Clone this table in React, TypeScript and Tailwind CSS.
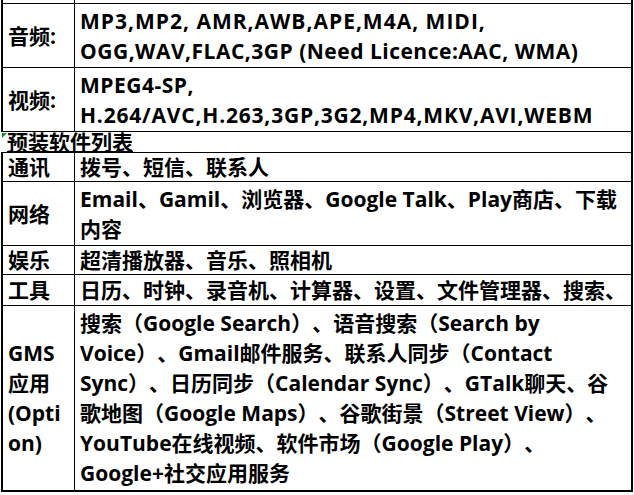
import React from 'react';

const font = { fontFamily: '"Open Sans", "Noto Sans CJK SC", sans-serif' };

type Line = [string, string?];

type Row = {
  label: React.ReactNode;
  lines: Line[];
  h: string;
};

// spec rows: latin text is set a little looser, like the sheet's renderer
const rows: Row[] = [
  {
    label: '音频:',
    lines: [
      ['MP3,MP2, AMR,AWB,APE,M4A, MIDI,', 'tracking-[1px]'],
      ['OGG,WAV,FLAC,3GP (Need Licence:AAC, WMA)', 'tracking-[0.5px]'],
    ],
    h: 'h-[64px]',
  },
  {
    label: '视频:',
    lines: [
      ['MPEG4-SP,', 'tracking-[0.5px]'],
      ['H.264/AVC,H.263,3GP,3G2,MP4,MKV,AVI,WEBM', 'tracking-[0.8px]'],
    ],
    h: 'h-[64px]',
  },
];

const apps: Row[] = [
  { label: '通讯', lines: [['拨号、短信、联系人']], h: 'h-[29px]' },
  { label: '网络', lines: [['Email、Gamil、浏览器、Google Talk、Play商店、下载'], ['内容']], h: 'h-[64px]' },
  { label: '娱乐', lines: [['超清播放器、音乐、照相机']], h: 'h-[29px]' },
  { label: '工具', lines: [['日历、时钟、录音机、计算器、设置、文件管理器、搜索、']], h: 'h-[31px]' },
  {
    label: (
      <>
        GMS
        <br />
        应用
        <br />
        (Opti
        <br />
        on)
      </>
    ),
    lines: [
      ['搜索（Google Search）、语音搜索（Search by'],
      ['Voice）、Gmail邮件服务、联系人同步（Contact'],
      ['Sync）、日历同步（Calendar Sync）、GTalk聊天、谷'],
      ['歌地图（Google Maps）、谷歌街景（Street View）、'],
      ['YouTube在线视频、软件市场（Google Play）、'],
      ['Google+社交应用服务'],
    ],
    h: 'h-[185px]',
  },
];

function TableRow({ row }: { row: Row }) {
  return (
    <div className={`flex border-t border-black ${row.h}`}>
      <div className="w-[72px] shrink-0 border-r border-black flex items-center pl-[5px] leading-[30px]">
        <span>{row.label}</span>
      </div>
      <div className="flex-1 flex flex-col justify-center pl-[5px] leading-[30px]">
        {row.lines.map(([t, c], i) => (
          <div key={i} className={`whitespace-nowrap ${c ?? ''}`}>
            {t}
          </div>
        ))}
      </div>
    </div>
  );
}

export default function App() {
  return (
    <div
      className="w-[634px] h-[495px] bg-white overflow-hidden text-black font-bold text-[21px] [text-spacing-trim:space-all]"
      style={font}
    >
      <div className="ml-[1px] w-[632px] border-r-2 border-b-2 border-black">
        <div className="border-l-2 border-black">
          <div className="flex h-[3px]">
            <div className="w-[72px] border-r border-black" />
          </div>
          {rows.map((r, i) => (
            <TableRow key={i} row={r} />
          ))}
        </div>
        {/* merged heading row, no left rule here */}
        <div className="relative h-[21px] border-t border-black pl-[6px] flex items-end">
          <span className="absolute left-[1px] top-[1px] w-0 h-0 border-t-[5px] border-r-[5px] border-t-[#1e8a1e] border-r-transparent" />
          <span className="underline decoration-1 underline-offset-1 leading-[20px]">预装软件列表</span>
        </div>
        <div className="border-l-2 border-black">
          {apps.map((r, i) => (
            <TableRow key={i} row={r} />
          ))}
        </div>
      </div>
    </div>
  );
}
